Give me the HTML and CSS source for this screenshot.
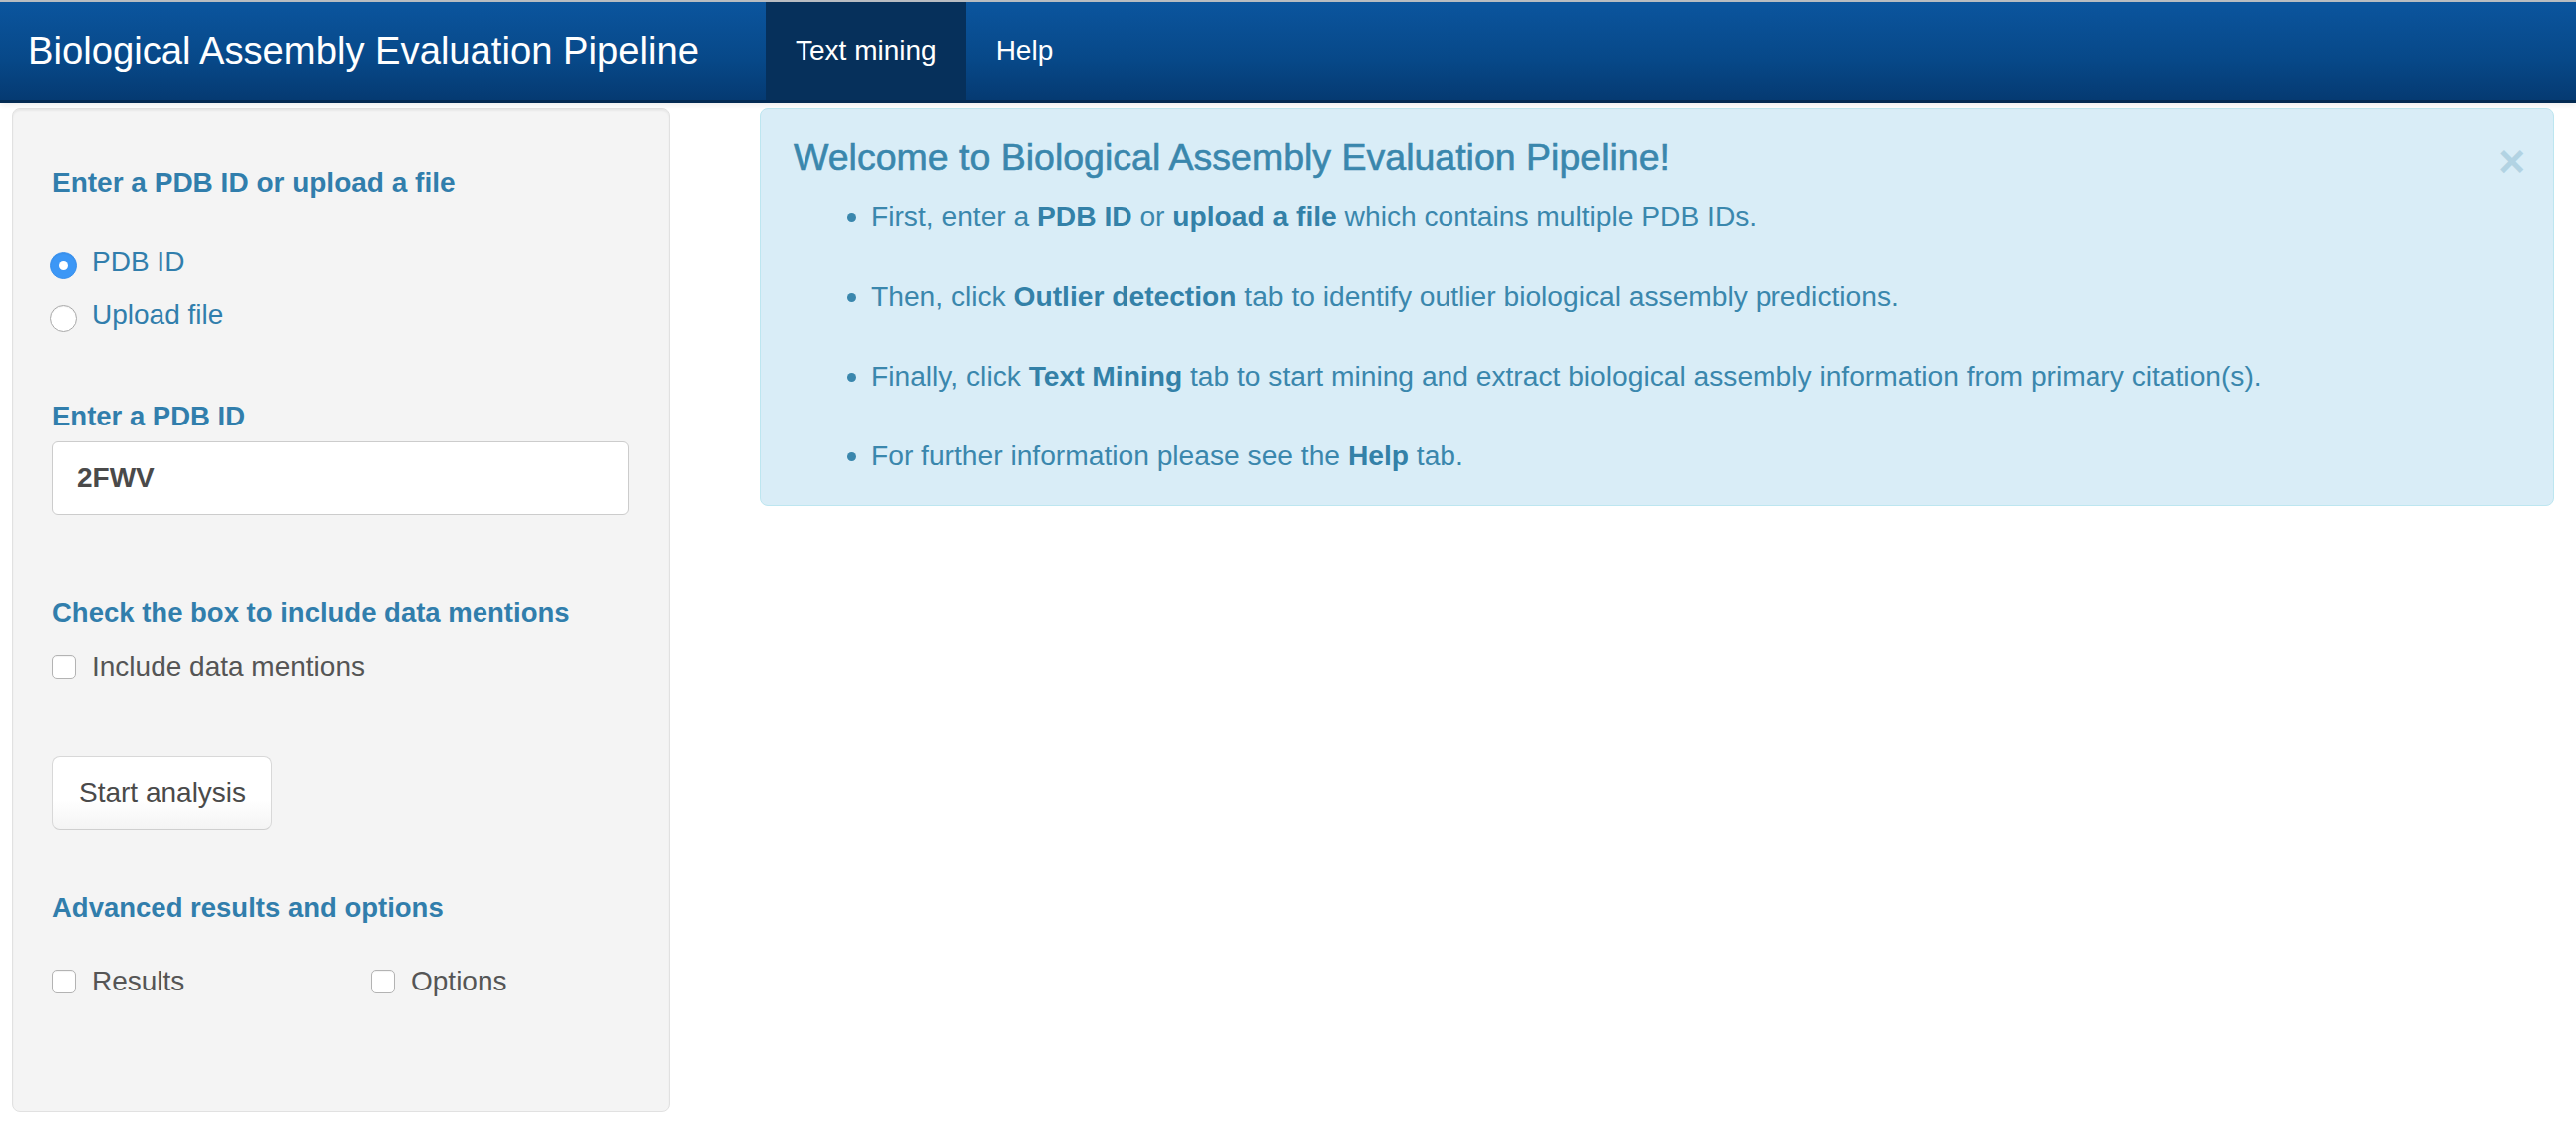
FILE: index.html
```html
<!DOCTYPE html>
<html lang="en">
<head>
<meta charset="utf-8">
<title>Biological Assembly Evaluation Pipeline</title>
<link rel="stylesheet" href="styles.css">
</head>
<body>
<header class="navbar">
  <div class="brand">Biological Assembly Evaluation Pipeline</div>
  <nav class="nav">
    <a class="nav-link active">Text mining</a>
    <a class="nav-link">Help</a>
  </nav>
</header>

<div class="page">
  <aside class="well">
    <div class="label lbl-1">Enter a PDB ID or upload a file</div>
    <div class="radio-group">
      <label class="radio-row"><span class="radio checked"></span><span>PDB ID</span></label>
      <label class="radio-row"><span class="radio"></span><span>Upload file</span></label>
    </div>

    <div class="label lbl-2">Enter a PDB ID</div>
    <div class="text-input">2FWV</div>

    <div class="label lbl-3">Check the box to include data mentions</div>
    <label class="check-row"><span class="checkbox"></span><span>Include data mentions</span></label>

    <div class="btn">Start analysis</div>

    <div class="label lbl-4">Advanced results and options</div>
    <div class="two-col">
      <label class="check-row"><span class="checkbox"></span><span>Results</span></label>
      <label class="check-row"><span class="checkbox"></span><span>Options</span></label>
    </div>
  </aside>

  <main class="main">
    <div class="alert">
      <span class="close">&times;</span>
      <h4 class="alert-title">Welcome to Biological Assembly Evaluation Pipeline!</h4>
      <ul class="steps">
        <li>First, enter a <b>PDB ID</b> or <b>upload a file</b> which contains multiple PDB IDs.</li>
        <li>Then, click <b>Outlier detection</b> tab to identify outlier biological assembly predictions.</li>
        <li>Finally, click <b>Text Mining</b> tab to start mining and extract biological assembly information from primary citation(s).</li>
        <li>For further information please see the <b>Help</b> tab.</li>
      </ul>
    </div>
  </main>
</div>
</body>
</html>
```

FILE: styles.css
```css
* { box-sizing: border-box; }

html, body {
  margin: 0;
  padding: 0;
  background: #ffffff;
}

body {
  font-family: "Liberation Sans", Arial, Helvetica, sans-serif;
  font-size: 28px;
  line-height: 40px;
  color: #555555;
}

/* ---------- navbar ---------- */
.navbar {
  display: flex;
  align-items: stretch;
  height: 103px;
  border-top: 2px solid #b8bcc1;
  border-bottom: 3px solid #032a52;
  background: linear-gradient(#0b559e, #074888 60%, #053a72);
  box-shadow: 0 2px 6px rgba(0, 0, 0, 0.08);
  position: relative;
  z-index: 1;
}

.brand {
  flex: 0 0 768px;
  padding-left: 28px;
  display: flex;
  align-items: center;
  color: #ffffff;
  font-size: 38.2px;
}

.nav {
  display: flex;
  align-items: stretch;
}

.nav-link {
  display: flex;
  align-items: center;
  padding: 0 29px 0 30px;
  color: #ffffff;
  font-size: 28px;
}

.nav-link.active {
  background: #06305b;
}

/* ---------- layout ---------- */
.page {
  display: flex;
  align-items: flex-start;
  gap: 90px;
  padding: 5px 22px 0 12px;
}

/* ---------- sidebar ---------- */
.well {
  flex: 0 0 660px;
  height: 1008px;
  background: #f4f4f4;
  border: 1px solid #e1e1e1;
  border-radius: 8px;
  box-shadow: inset 0 2px 2px rgba(0, 0, 0, 0.05);
  padding: 55px 39px 0 39px;
}

.label {
  color: #317eac;
  font-weight: bold;
  font-size: 27.5px;
}

.lbl-1 { font-size: 28px; }
.lbl-2 { margin-top: 62px; }
.lbl-3 { margin-top: 78px; }
.lbl-4 { margin-top: 58px; }

.radio-group {
  margin-top: 39px;
  display: flex;
  flex-direction: column;
  gap: 13px;
}

.radio-row {
  display: flex;
  align-items: center;
  color: #317eac;
  height: 40px;
}

.radio {
  flex: 0 0 auto;
  width: 27px;
  height: 27px;
  margin: 6px 15px 0 -2px;
  border-radius: 50%;
  background: #ffffff;
  border: 1px solid #a9a9a9;
  box-shadow: inset 0 1px 1px rgba(0, 0, 0, 0.06);
  display: flex;
  align-items: center;
  justify-content: center;
}

.radio.checked {
  background: #3c97f6;
  border-color: #3a90ec;
}

.radio.checked::after {
  content: "";
  width: 9px;
  height: 9px;
  border-radius: 50%;
  background: #ffffff;
}

.text-input {
  margin-top: 5px;
  height: 74px;
  width: 579px;
  background: #ffffff;
  border: 1px solid #cccccc;
  border-radius: 6px;
  padding: 0 24px;
  display: flex;
  align-items: center;
  font-weight: bold;
  color: #4a4a4a;
}

.check-row {
  display: flex;
  align-items: center;
  height: 40px;
  color: #555555;
}

.lbl-3 + .check-row { margin-top: 14px; }

.checkbox {
  flex: 0 0 auto;
  width: 24px;
  height: 24px;
  margin: 0 16px 0 0;
  background: #ffffff;
  border: 1px solid #b3b3b3;
  border-radius: 5px;
  box-shadow: inset 0 1px 1px rgba(0, 0, 0, 0.05);
}

.btn {
  display: inline-flex;
  align-items: center;
  margin-top: 70px;
  height: 74px;
  padding: 0 25px 0 26px;
  border: 1px solid #d8d8d8;
  border-bottom-color: #cfcfcf;
  border-radius: 8px;
  background: linear-gradient(#ffffff, #ffffff 60%, #f4f4f4);
  color: #4a4a4a;
}

.two-col {
  margin-top: 34px;
  display: grid;
  grid-template-columns: 260px 260px;
  column-gap: 60px;
}

/* ---------- main ---------- */
.main {
  flex: 1 1 auto;
}

.alert {
  position: relative;
  height: 400px;
  background: #d9edf7;
  border: 1px solid #bde6f0;
  border-radius: 8px;
  padding: 27px 33px 0 33px;
  color: #3a87ad;
}

.alert-title {
  margin: 0;
  font-size: 37.5px;
  line-height: 44px;
  font-weight: normal;
  color: #3a87ad;
  -webkit-text-stroke: 0.6px #3a87ad;
}

.close {
  position: absolute;
  top: 30px;
  right: 28px;
  font-size: 46px;
  line-height: 46px;
  font-weight: bold;
  color: #b2d3e3;
}

.steps {
  margin: 17px 0 0 0;
  padding-left: 78px;
}

.steps li {
  margin-bottom: 40px;
  line-height: 40px;
  font-size: 28.2px;
}

.steps b {
  font-weight: bold;
  color: #3381a8;
}
```
